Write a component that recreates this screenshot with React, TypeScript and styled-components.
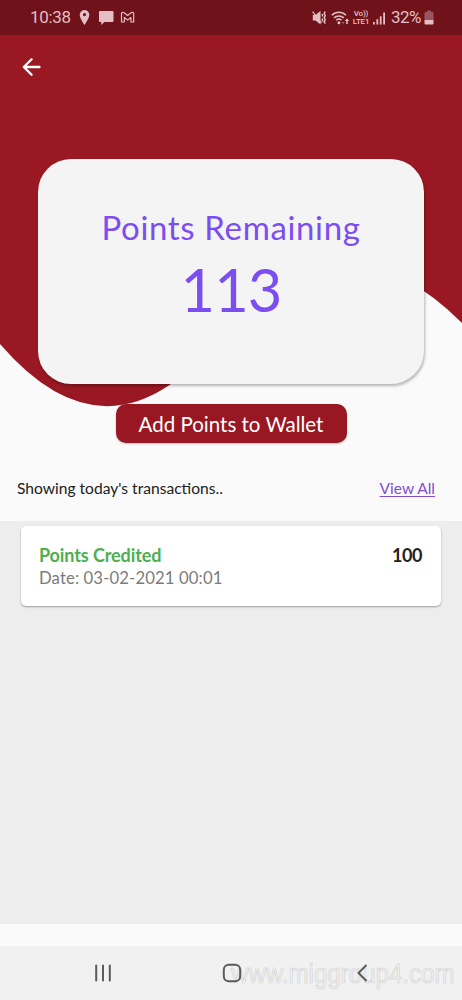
import React from "react";
import styled, { createGlobalStyle } from "styled-components";

const Global = createGlobalStyle`
  * { box-sizing: border-box; }
  body { margin: 0; background: #fafafa; }
`;

const Screen = styled.div`
  position: relative;
  width: 462px;
  height: 1000px;
  display: flex;
  flex-direction: column;
  overflow: hidden;
  background: #fafafa;
  font-family: Lato, "Open Sans", sans-serif;
  color: #212121;
`;

const Wave = styled.svg`
  position: absolute;
  top: 0;
  left: 0;
`;

const StatusBar = styled.header`
  position: relative;
  flex: none;
  height: 35px;
  padding: 0 28px 0 30px;
  display: flex;
  align-items: center;
  justify-content: space-between;
  background: #6f121a;
  color: #e3bfc5;
  font: 17px/35px Roboto, sans-serif;
`;

const StatusGroup = styled.div`
  display: flex;
  align-items: center;
  height: 34px;
  svg { display: block; flex: none; }
`;

const Clock = styled.span`
  width: 49px;
  letter-spacing: -0.3px;
`;

const Percent = styled.span`
  margin-left: 5px;
  width: 33px;
  letter-spacing: -0.5px;
`;

const Gap = styled.span<{ $width: number }>`
  width: ${(p) => p.$width}px;
`;

const AppBar = styled.div`
  position: relative;
  flex: none;
  height: 124px;
  padding: 20px 20px 0;
`;

const BackButton = styled.button`
  display: block;
  width: 24px;
  height: 24px;
  padding: 0;
  border: 0;
  background: none;
  svg { display: block; }
`;

const BalanceCard = styled.section`
  position: relative;
  flex: none;
  width: 386px;
  height: 225px;
  margin: 0 auto;
  padding-top: 46px;
  display: flex;
  flex-direction: column;
  align-items: center;
  border-radius: 33px;
  background: #f4f4f4;
  box-shadow: 1px 2px 3px rgba(0, 0, 0, 0.28);
  color: #7c4df0;
`;

const Label = styled.div<{ $size: number; $line: number; $track?: number; $bold?: boolean; $color?: string }>`
  font-size: ${(p) => p.$size}px;
  line-height: ${(p) => p.$line}px;
  letter-spacing: ${(p) => p.$track ?? 0}px;
  font-weight: ${(p) => (p.$bold ? 700 : 400)};
  ${(p) => p.$color && `color: ${p.$color};`}
  white-space: nowrap;
`;

const WalletButton = styled.button`
  position: relative;
  flex: none;
  width: 231px;
  height: 39px;
  margin: 20px auto 0;
  padding: 1px 0 0;
  display: flex;
  align-items: center;
  justify-content: center;
  border: 0;
  border-radius: 10px;
  background: #991722;
  box-shadow: 0 1px 2px rgba(0, 0, 0, 0.25);
  color: #fff;
  font-family: inherit;
`;

const ListHeader = styled.div`
  flex: none;
  height: 78px;
  padding: 35px 27px 0 17px;
  display: flex;
  justify-content: space-between;
  align-items: flex-start;
`;

const ViewAll = styled.a`
  color: #7e4fd6;
  font-size: 15.5px;
  line-height: 20px;
  text-decoration: underline;
  text-decoration-thickness: 1px;
  text-underline-offset: 2px;
`;

const List = styled.main`
  flex: none;
  height: 403px;
  padding: 5px 21px 0;
  background: #ededed;
`;

const Transaction = styled.article`
  height: 80px;
  padding: 18px 19px 0 18px;
  display: flex;
  justify-content: space-between;
  border-radius: 5px;
  background: #fff;
  box-shadow: 0 1px 2px rgba(0, 0, 0, 0.35);
`;

const NavBar = styled.nav`
  position: relative;
  height: 54px;
  margin-top: auto;
  padding: 0 92px 0 93px;
  display: flex;
  align-items: center;
  justify-content: space-between;
  background: #f1f1f1;
  svg { display: block; position: relative; }
`;

const Watermark = styled.span`
  position: absolute;
  left: 231px;
  top: 12px;
  font: 28px/32px "Liberation Sans", sans-serif;
  color: transparent;
  -webkit-text-stroke: 0.7px #d2d2d2;
  transform: scaleX(0.86);
  transform-origin: left;
  white-space: nowrap;
`;

const ink = "#e3bfc5";

const StatusLeftIcons = () => (
  <svg width="58" height="20" viewBox="0 0 58 20">
    <path fill={ink} fillRule="evenodd" d="M5.5 2a4.800 4.800 0 0 0-4.800 4.800c0 3.700 4.800 10.200 4.800 10.200s4.800-6.500 4.800-10.200A4.800 4.800 0 0 0 5.500 2zm0 3a1.600 1.600 0 1 1 0 3.200 1.600 1.600 0 0 1 0-3.200z" />
    <path fill={ink} d="M21 3h12.500a1 1 0 0 1 1 1v8.900a1 1 0 0 1-1 1H25.500l-3.200 3v-3H21a1 1 0 0 1-1-1V4a1 1 0 0 1 1-1z" />
    <path fill="none" stroke={ink} strokeWidth="1.200" strokeLinejoin="round" d="M42.500 14V6c0-1.700 1.500-2.200 2.600-1.300l3.500 2.800 3.500-2.800c1.100-.9 2.600-.4 2.600 1.300v8h-2.800V9.500l-3.300 2.600-3.300-2.600V14z" />
  </svg>
);

const MuteIcon = () => (
  <svg width="15" height="18" viewBox="0 0 15 18">
    <path fill={ink} d="M.8 6h2.700L8.500 2v13.500L3.500 11.500H.8z" />
    <path stroke={ink} strokeWidth="1.300" d="M.6 2.600l8.800 11.600" />
    <path fill="none" stroke={ink} strokeWidth="1.500" d="M10.400 5v2.500M10.400 9.500v3M13.200 2.500l-1 2 1 2-1 2.200 1 2.100-1 2 1 1.900" />
  </svg>
);

const WifiIcon = () => (
  <svg width="19" height="18" viewBox="0 0 19 18">
    <g fill="none" stroke={ink} strokeWidth="1.500">
      <path d="M.8 6.300c4-4 10.200-4 14.200 0M3 8.900c2.800-2.700 7-2.700 9.800 0M5.300 11.300c1.500-1.400 3.700-1.400 5.200 0" />
    </g>
    <circle cx="7.900" cy="13.700" r="1.500" fill={ink} />
    <path fill={ink} d="M16 9.500l2.300 2.500h-1.500v3h-1.600v-3h-1.500z" />
    <path fill={ink} opacity=".5" d="M12.200 15l-1.500-2h3z" />
  </svg>
);

const Lte = styled.span`
  width: 18px;
  margin-left: 2px;
  display: flex;
  flex-direction: column;
  align-items: center;
  font-size: 8px;
  line-height: 8px;
  font-weight: 500;
  letter-spacing: -0.2px;
  white-space: nowrap;
`;

const LteLine = styled.span`
  height: 8px;
  overflow: hidden;
`;

const SignalIcon = () => (
  <svg width="14" height="18" viewBox="0 0 14 18">
    <path fill={ink} d="M1 13h1.800v2.500H1zM4.400 10.300h1.800v5.200H4.400zM7.800 7.300h1.800v8.200H7.800zM11.200 3.500H13v12h-1.800z" />
  </svg>
);

const BatteryIcon = () => (
  <svg width="10" height="18" viewBox="0 0 10 18">
    <path fill="#9a5660" d="M3 1.500h4V3h1.500a1 1 0 0 1 1 1v7.500h-9V4a1 1 0 0 1 1-1H3z" />
    <path fill={ink} d="M.5 11h9v3.500a1 1 0 0 1-1 1h-7a1 1 0 0 1-1-1z" />
  </svg>
);

export default function App() {
  return (
    <Screen>
      <Global />
      <Wave width="462" height="410" viewBox="0 0 462 410">
        <path fill="#991823" d="M0 0H462V323Q346.500 207 231 323Q115.500 478 0 344z" />
      </Wave>
      <StatusBar>
        <StatusGroup>
          <Clock>10:38</Clock>
          <StatusLeftIcons />
        </StatusGroup>
        <StatusGroup>
          <MuteIcon />
          <Gap $width={4} />
          <WifiIcon />
          <Lte>
            <LteLine>Vo))</LteLine>
            <LteLine>LTE1</LteLine>
          </Lte>
          <Gap $width={2} />
          <SignalIcon />
          <Percent>32%</Percent>
          <BatteryIcon />
        </StatusGroup>
      </StatusBar>
      <AppBar>
        <BackButton aria-label="Back">
          <svg width="24" height="24" viewBox="0 0 24 24" fill="none" stroke="#fff" strokeWidth="2.300" strokeLinecap="round" strokeLinejoin="round">
            <path d="M19.500 12H4M11.600 4.200L3.800 12l7.800 7.800" />
          </svg>
        </BackButton>
      </AppBar>
      <BalanceCard>
        <Label $size={33} $line={44} $track={0.65}>Points Remaining</Label>
        <Label $size={59.5} $line={80} $track={-0.9}>113</Label>
      </BalanceCard>
      <WalletButton>
        <Label $size={20.5} $line={30}>Add Points to Wallet</Label>
      </WalletButton>
      <ListHeader>
        <Label $size={15.6} $line={20}>Showing today's transactions..</Label>
        <ViewAll>View All</ViewAll>
      </ListHeader>
      <List>
        <Transaction>
          <div>
            <Label $size={18} $line={23} $track={-0.1} $bold $color="#4caf50">Points Credited</Label>
            <Label $size={16.7} $line={23} $track={0.12} $color="#7b7b7b">Date: 03-02-2021 00:01</Label>
          </div>
          <Label $size={18} $line={23} $track={-0.4} $bold>100</Label>
        </Transaction>
      </List>
      <NavBar>
        <Watermark>www.miggroup4.com</Watermark>
        <svg width="20" height="20" viewBox="0 0 20 20" stroke="#5b5b5b" strokeWidth="2" strokeLinecap="round">
          <path d="M3.200 2.500v15M10 2.500v15M16.800 2.500v15" />
        </svg>
        <svg width="20" height="20" viewBox="0 0 20 20" fill="none" stroke="#5b5b5b" strokeWidth="2">
          <rect x="1.800" y="1.800" width="16.400" height="16.400" rx="5" />
        </svg>
        <svg width="20" height="20" viewBox="0 0 20 20" fill="none" stroke="#5b5b5b" strokeWidth="2">
          <path d="M16.500 2L8.500 10l8 8" />
        </svg>
      </NavBar>
    </Screen>
  );
}
